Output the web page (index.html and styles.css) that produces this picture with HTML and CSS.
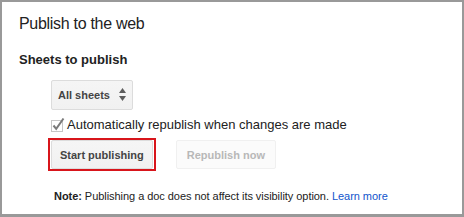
FILE: index.html
```html
<!DOCTYPE html>
<html lang="en">
<head>
    <meta charset="UTF-8">
    <meta name="viewport" content="width=device-width, initial-scale=1.0">
    <title>Publish to the web</title>
    <link rel="stylesheet" href="styles.css">
</head>
<body>
    <div class="dialog">
        <h1 class="dialog-title">Publish to the web</h1>
        <h2 class="section-title">Sheets to publish</h2>
        <div class="options">
            <button class="select-button" type="button">
                All sheets
                <svg class="select-arrows" width="7" height="14" viewBox="0 0 7 14">
                    <path d="M3.5 0 L7 5 L0 5 Z" fill="#5c5c5c"/>
                    <path d="M0 8 L7 8 L3.5 13 Z" fill="#5c5c5c"/>
                </svg>
            </button>
            <label class="checkbox-row">
                <svg class="checkbox" width="16" height="16" viewBox="0 0 16 16">
                    <rect x="1.5" y="3.5" width="11" height="11" fill="#fff" stroke="#c6c6c6"/>
                    <path d="M3.5 8.5 L6.2 11.8 L13.5 1.5" fill="none" stroke="#7a7a7a" stroke-width="2"/>
                </svg>
                Automatically republish when changes are made
            </label>
            <div class="button-row">
                <span class="highlight">
                    <button class="btn" type="button">Start publishing</button>
                </span>
                <button class="btn" type="button" disabled>Republish now</button>
            </div>
        </div>
        <p class="note"><b>Note:</b> Publishing a doc does not affect its visibility option. <a href="#">Learn more</a></p>
    </div>
</body>
</html>
```

FILE: styles.css
```css
body {
    margin: 0;
    font-family: "Liberation Sans", Arial, sans-serif;
    color: #222;
    background: #fff;
}

.dialog {
    box-sizing: border-box;
    width: 464px;
    height: 217px;
    border: 2px solid #999;
    border-bottom-width: 3px;
    padding: 12px 0 0 17px;
}

.dialog-title {
    margin: 0;
    font-size: 16px;
    font-weight: normal;
    line-height: 20px;
    letter-spacing: -0.3px;
}

.section-title {
    margin: 18px 0 0;
    font-size: 13px;
    font-weight: bold;
    line-height: 16px;
}

.options {
    margin: 12px 0 0 32px;
}

.select-button {
    display: flex;
    align-items: center;
    justify-content: space-between;
    box-sizing: border-box;
    width: 82px;
    height: 30px;
    padding: 0 6px 0 6px;
    border: 1px solid #dcdcdc;
    border-radius: 2px;
    background: linear-gradient(#f5f5f5, #f1f1f1);
    font-family: inherit;
    font-size: 11px;
    font-weight: bold;
    color: #444;
}

.checkbox-row {
    display: flex;
    align-items: center;
    gap: 1px;
    margin: 7px 0 0 -1px;
    font-size: 13px;
    line-height: 16px;
}

.button-row {
    display: flex;
    align-items: center;
    gap: 20px;
    margin-top: 5px;
    margin-left: -3px;
}

.highlight {
    display: flex;
    border: 2px solid #d8151b;
    padding: 0 1px;
}

.btn {
    box-sizing: border-box;
    height: 29px;
    padding: 0 8px;
    border: 1px solid #dcdcdc;
    border-radius: 2px;
    background: linear-gradient(#f5f5f5, #f1f1f1);
    font-family: inherit;
    font-size: 11px;
    font-weight: bold;
    color: #444;
}

.btn:disabled {
    padding: 0 10px;
    border-color: #f0f0f0;
    background: #fbfbfb;
    color: #b8b8b8;
}

.note {
    margin: 19px 0 0 35px;
    font-size: 11px;
    line-height: 13px;
    letter-spacing: -0.05px;
}

.note a {
    color: #15c;
    text-decoration: none;
}
```
